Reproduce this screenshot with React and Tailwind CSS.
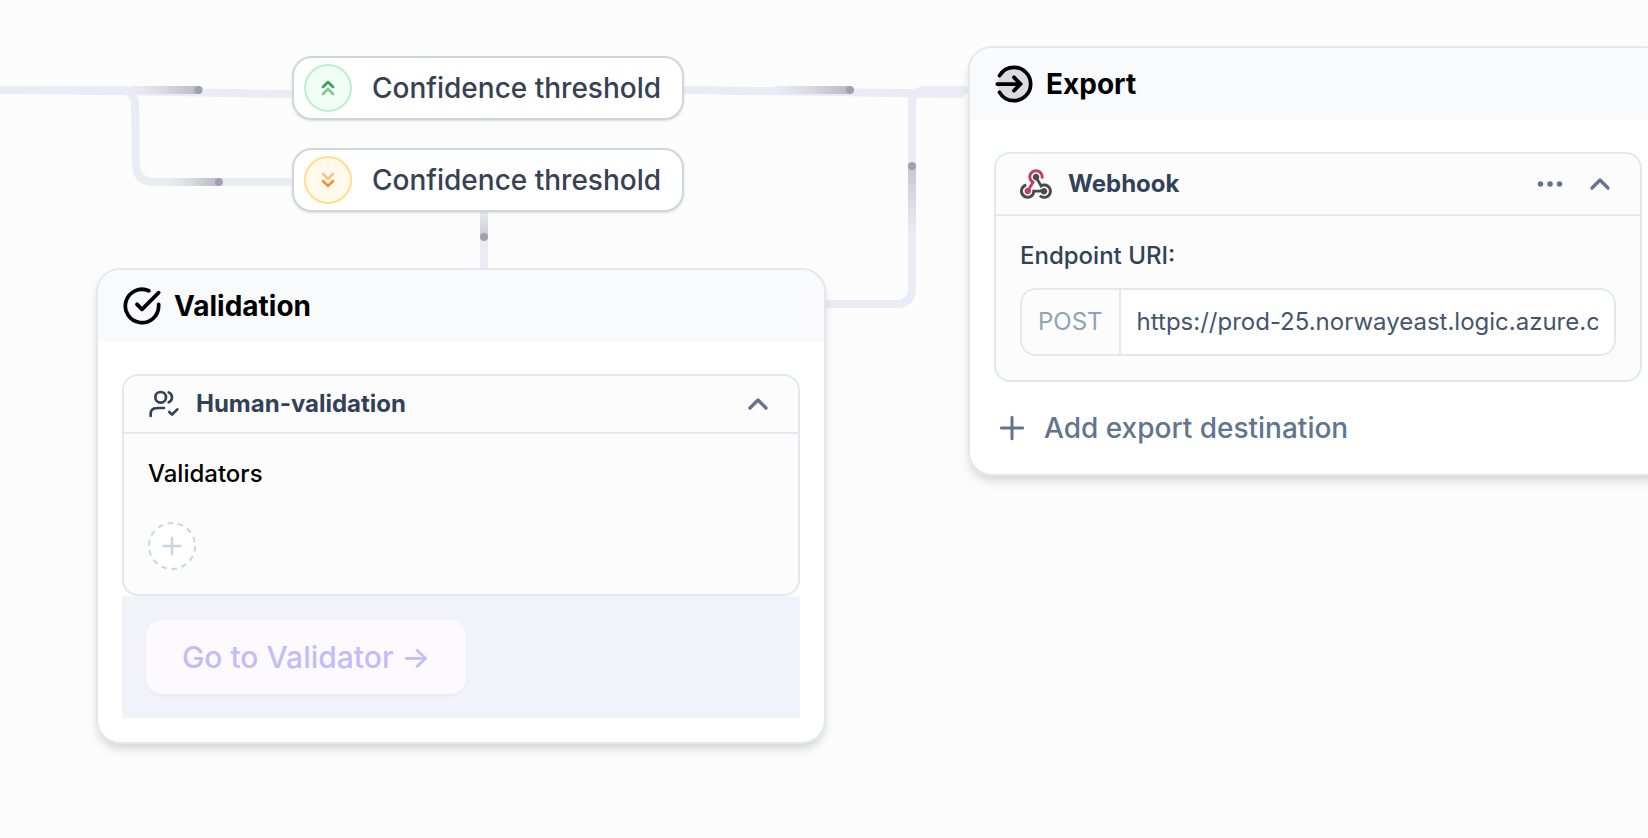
import React from "react";

const LINE = "#ebebf5";

function Connectors() {
  return (
    <svg
      aria-hidden="true"
      className="absolute top-0 left-0 h-[838px] w-[1648px]"
      viewBox="0 0 1648 838"
      fill="none"
    >
      <defs>
        <linearGradient id="trail-right">
          <stop offset="0" stopColor={LINE} />
          <stop offset="0.4" stopColor="#dddde6" />
          <stop offset="1" stopColor="#b9b9c4" />
        </linearGradient>
        <linearGradient id="trail-down" x1="0" y1="0" x2="0" y2="1">
          <stop offset="0" stopColor={LINE} />
          <stop offset="1" stopColor="#c8c8d2" />
        </linearGradient>
        <linearGradient id="trail-up" x1="0" y1="1" x2="0" y2="0">
          <stop offset="0" stopColor={LINE} />
          <stop offset="1" stopColor="#c8c8d2" />
        </linearGradient>
      </defs>
      <g stroke={LINE} strokeWidth="8" strokeLinecap="round">
        <path d="M-10 90L115 91L288 94" />
        <path d="M-10 90H120Q135 90 135 106L136 164Q136 182 154 182H288" />
        <path d="M686 90L960 94" />
        <path d="M820 304H896Q912 304 912 288V104Q912 90 926 90H964" />
        <path d="M484 208V272" />
      </g>
      <rect x="131" y="86" width="68" height="8" fill="url(#trail-right)" />
      <rect x="169" y="178" width="50" height="8" fill="url(#trail-right)" />
      <rect x="775" y="86" width="75" height="8" fill="url(#trail-right)" />
      <rect x="480" y="212" width="8" height="25" fill="url(#trail-down)" />
      <rect x="908" y="166" width="8" height="66" fill="url(#trail-up)" />
      <g fill="#9ca3af">
        <circle cx="198.5" cy="90" r="4" />
        <circle cx="219" cy="182" r="4" />
        <circle cx="850" cy="90" r="4" />
        <circle cx="484" cy="237" r="4" />
        <circle cx="912" cy="166" r="4" />
      </g>
    </svg>
  );
}

function Icon({ className, width = 2, children }) {
  return (
    <svg
      aria-hidden="true"
      className={className}
      viewBox="0 0 24 24"
      fill="none"
      stroke="currentColor"
      strokeWidth={width}
      strokeLinecap="round"
      strokeLinejoin="round"
    >
      {children}
    </svg>
  );
}

function ChevronUp() {
  return (
    <Icon className="size-8" width={2.5}>
      <path d="M18 15L12 9L6 15" />
    </Icon>
  );
}

function WebhookLogo() {
  return (
    <svg aria-hidden="true" className="h-8 w-8" viewBox="0 -8.5 256 256">
      <path
        fill="#be3f62"
        d="M119.54 100.503c-10.61 17.836-20.775 35.108-31.152 52.25-2.665 4.401-3.984 7.986-1.855 13.58 5.878 15.454-2.414 30.493-17.998 34.575-14.697 3.851-29.016-5.808-31.932-21.543-2.584-13.927 8.224-27.58 23.58-29.757 1.286-.184 2.6-.205 4.762-.367l23.358-39.168C73.612 95.465 64.868 78.39 66.803 57.23c1.368-14.957 7.25-27.883 18-38.477 20.59-20.288 52.002-23.573 76.246-8.001 23.284 14.958 33.948 44.094 24.858 69.031-6.854-1.858-13.756-3.732-21.343-5.79 2.854-13.865.743-26.315-8.608-36.981-6.178-7.042-14.106-10.733-23.12-12.093-18.072-2.73-35.815 8.88-41.08 26.618-5.976 20.132 3.069 36.575 27.784 48.967z"
      />
      <path
        fill="#4B4B4B"
        d="M149.841 79.41c7.475 13.187 15.065 26.573 22.587 39.836 38.02-11.763 66.686 9.284 76.97 31.817 12.422 27.219 3.93 59.457-20.465 76.25-25.04 17.238-56.707 14.293-78.892-7.851 5.654-4.733 11.336-9.487 17.407-14.566 21.912 14.192 41.077 13.524 55.305-3.282 12.133-14.337 11.87-35.714-.615-49.75-14.408-16.197-33.707-16.691-57.035-1.143-9.677-17.168-19.522-34.199-28.893-51.491-3.16-5.828-6.648-9.21-13.77-10.443-11.893-2.062-19.571-12.275-20.032-23.717-.453-11.316 6.214-21.545 16.634-25.53 10.322-3.949 22.435-.762 29.378 8.014 5.674 7.17 7.477 15.24 4.491 24.083-.83 2.466-1.905 4.852-3.07 7.774z"
      />
      <path
        fill="#4A4A4A"
        d="M167.707 187.21h-45.77c-4.387 18.044-13.863 32.612-30.19 41.876-12.693 7.2-26.373 9.641-40.933 7.29-26.808-4.323-48.728-28.456-50.658-55.63-2.184-30.784 18.975-58.147 47.178-64.293 1.947 7.071 3.915 14.21 5.862 21.264-25.876 13.202-34.832 29.836-27.59 50.636 6.375 18.304 24.484 28.337 44.147 24.457 20.08-3.962 30.204-20.65 28.968-47.432 19.036 0 38.088-.197 57.126.097 7.434.117 13.173-.654 18.773-7.208 9.22-10.784 26.191-9.811 36.121.374 10.148 10.409 9.662 27.157-1.077 37.127-10.361 9.62-26.73 9.106-36.424-1.26-1.992-2.136-3.562-4.673-5.533-7.298z"
      />
    </svg>
  );
}

function ThresholdPill({ position, badge, children }) {
  return (
    <div
      className={`absolute flex h-16 w-[392px] items-center gap-5 rounded-[20px] border-2 border-gray-300 bg-white pl-[10px] shadow-sm ${position}`}
    >
      <span className={`flex size-12 items-center justify-center rounded-full border-2 ${badge}`}>
        {children}
      </span>
      <span className="text-[28px] leading-9 font-medium whitespace-nowrap text-gray-700">
        Confidence threshold
      </span>
    </div>
  );
}

function NodeCard({ position, icon, title, children }) {
  return (
    <section
      className={`absolute overflow-hidden rounded-3xl border-2 border-slate-200 bg-white shadow-[0_8px_12px_-2px_rgba(0,0,0,0.1),0_4px_8px_-2px_rgba(0,0,0,0.08)] ${position}`}
    >
      <header className="flex h-[72px] items-center gap-3 bg-slate-50 px-6 text-black">
        {icon}
        <h2 className="text-[28px] leading-9 font-bold">{title}</h2>
      </header>
      {children}
    </section>
  );
}

export default function App() {
  return (
    <main className="relative min-h-screen overflow-hidden bg-[#fcfcfc] font-['Inter',sans-serif]">
      <Connectors />

      <ThresholdPill position="top-14 left-[292px]" badge="border-[#bbf0cd] bg-green-50 text-[#3f9a5c]">
        <Icon className="size-6" width={2.5}>
          <path d="M17 11L12 6L7 11" />
          <path d="M17 18L12 13L7 18" opacity="0.6" />
        </Icon>
      </ThresholdPill>

      <ThresholdPill position="top-[148px] left-[292px]" badge="border-[#fde08a] bg-[#fffaeb] text-[#f09030]">
        <Icon className="size-6" width={2.5}>
          <path d="M7 6L12 11L17 6" opacity="0.55" />
          <path d="M7 13L12 18L17 13" />
        </Icon>
      </ThresholdPill>

      <NodeCard
        position="top-[268px] left-[96px] w-[730px]"
        title="Validation"
        icon={
          <Icon className="size-10" width={2.25}>
            <path d="M22 11.08V12A10 10 0 1 1 16.07 2.86" />
            <path d="M22 4L12 14.01L9 11.01" />
          </Icon>
        }
      >
        <div className="px-6 pt-8 pb-6">
          <div className="rounded-2xl border-2 border-slate-200 bg-[#fcfcfc]">
            <div className="flex h-[58px] items-center gap-4 border-b-2 border-slate-200 px-6 text-slate-700">
              <Icon className="size-8">
                <path d="M16 18L18 20L22 16" />
                <path d="M12 15H8C6.136 15 5.204 15 4.469 15.305C3.489 15.71 2.71 16.489 2.304 17.469C2 18.204 2 19.136 2 21" />
                <path d="M15.5 3.29C16.966 3.884 18 5.321 18 7C18 8.679 16.966 10.116 15.5 10.71" />
                <circle cx="9.5" cy="7" r="4" />
              </Icon>
              <h3 className="flex-1 text-2xl font-bold">Human-validation</h3>
              <button type="button" aria-label="Collapse human-validation" className="text-slate-500">
                <ChevronUp />
              </button>
            </div>
            <div className="flex flex-col items-start gap-8 p-6">
              <p className="text-2xl font-medium text-black">Validators</p>
              <button
                type="button"
                aria-label="Add validator"
                className="rounded-full bg-white text-slate-300"
              >
                <svg className="size-12" viewBox="0 0 48 48" fill="none" stroke="currentColor" strokeWidth="2">
                  <circle cx="24" cy="24" r="23" strokeDasharray="5.6 4.72" />
                  <path d="M24 15.75V32.25M15.75 24H32.25" strokeLinecap="round" strokeWidth="2.5" />
                </svg>
              </button>
            </div>
          </div>
          <div className="bg-[#f2f3f8] p-6">
            <button
              type="button"
              className="h-[74px] w-80 rounded-2xl bg-[#fcfaff] text-[30px] font-medium whitespace-nowrap text-[#c4bcf8] shadow-[0_2px_4px_rgba(0,0,0,0.04)]"
            >
              Go to Validator →
            </button>
          </div>
        </div>
      </NodeCard>

      <NodeCard
        position="top-[46px] left-[968px] w-[700px]"
        title="Export"
        icon={
          <Icon className="size-10" width={2.25}>
            <circle cx="12" cy="12" r="10" fill="currentColor" opacity="0.12" stroke="none" />
            <path d="M3.338 7A9.996 9.996 0 0 1 12 2C17.523 2 22 6.477 22 12S17.523 22 12 22A9.996 9.996 0 0 1 3.338 17" />
            <path d="M12 16L16 12L12 8M16 12H2" />
          </Icon>
        }
      >
        <div className="px-6 pt-8 pb-6">
          <div className="rounded-2xl border-2 border-slate-200 bg-[#fcfcfc]">
            <div className="flex h-[62px] items-center gap-4 border-b-2 border-slate-200 px-6 text-slate-700">
              <WebhookLogo />
              <h3 className="flex-1 text-2xl font-bold">Webhook</h3>
              <div className="flex items-center gap-[18px] text-slate-500">
                <button type="button" aria-label="Webhook options">
                  <svg className="size-8" viewBox="0 0 32 32" fill="currentColor">
                    <circle cx="6.5" cy="16" r="2.75" />
                    <circle cx="16" cy="16" r="2.75" />
                    <circle cx="25.5" cy="16" r="2.75" />
                  </svg>
                </button>
                <button type="button" aria-label="Collapse webhook">
                  <ChevronUp />
                </button>
              </div>
            </div>
            <div className="flex flex-col gap-4 p-6">
              <label htmlFor="endpoint-uri" className="text-2xl font-medium text-slate-700">
                Endpoint URI:
              </label>
              <div className="flex h-[68px] overflow-hidden rounded-2xl border-2 border-slate-200 bg-white text-2xl">
                <span className="flex items-center border-r-2 border-slate-200 bg-[#fcfcfc] px-4 text-slate-400">
                  POST
                </span>
                <input
                  id="endpoint-uri"
                  type="text"
                  defaultValue="https://prod-25.norwayeast.logic.azure.c"
                  className="min-w-0 flex-1 bg-white px-4 text-slate-600 outline-none"
                />
              </div>
            </div>
          </div>
          <button
            type="button"
            className="mt-6 flex h-11 items-center gap-4 pl-0.5 text-[28px] leading-9 font-medium text-slate-500"
          >
            <Icon className="size-8" width={2.25}>
              <path d="M12 4V20M4 12H20" />
            </Icon>
            Add export destination
          </button>
        </div>
      </NodeCard>
    </main>
  );
}
